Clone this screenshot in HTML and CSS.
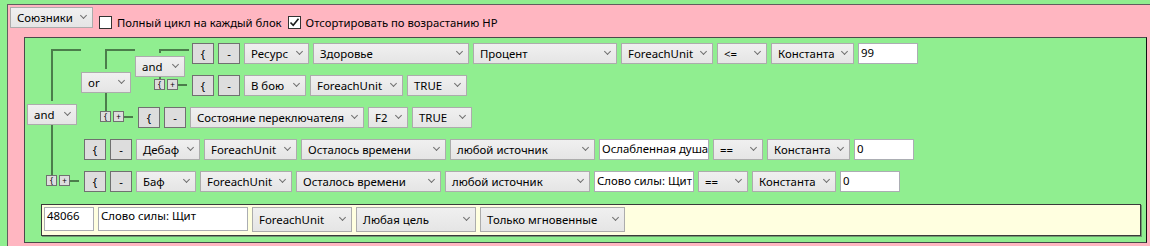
FILE: index.html
```html
<!DOCTYPE html>
<html lang="ru">
<head>
    <meta charset="UTF-8">
    <title>Правила</title>
    <link rel="stylesheet" href="styles.css">
</head>
<body>
    <div class="window">
        <div class="topbar">
            <div class="combo w83">Союзники</div>
            <label class="check"><span class="box"></span>Полный цикл на каждый блок</label>
            <label class="check"><span class="box"><svg width="11" height="11" viewBox="0 0 11 11"><path d="M1.5 5.5 L4.2 8.3 L9.5 1.8" fill="none" stroke="#1a1a1a" stroke-width="1.6"/></svg></span>Отсортировать по возрастанию HP</label>
        </div>

        <div class="rules">
            <!-- outer and -->
            <div class="group">
                <div class="op">
                    <div class="br-top"></div>
                    <div class="combo op-box">and</div>
                    <div class="br-mid"></div>
                    <div class="br-end"><span class="mini">{</span><span class="mini">+</span><span class="tail"></span></div>
                </div>
                <div class="kids">
                    <!-- or -->
                    <div class="group">
                        <div class="op">
                            <div class="br-top"></div>
                            <div class="combo op-box">or</div>
                            <div class="br-mid"></div>
                            <div class="br-end"><span class="mini">{</span><span class="mini">+</span><span class="tail"></span></div>
                        </div>
                        <div class="kids">
                            <!-- inner and -->
                            <div class="group">
                                <div class="op">
                                    <div class="br-top"></div>
                                    <div class="combo op-box">and</div>
                                    <div class="br-mid"></div>
                                    <div class="br-end"><span class="mini">{</span><span class="mini">+</span><span class="tail"></span></div>
                                </div>
                                <div class="kids">
                                    <div class="row">
                                        <div class="btn">{</div>
                                        <div class="btn">-</div>
                                        <div class="combo w65">Ресурс</div>
                                        <div class="combo w156">Здоровье</div>
                                        <div class="combo w144">Процент</div>
                                        <div class="combo w92">ForeachUnit</div>
                                        <div class="combo w50">&lt;=</div>
                                        <div class="combo w83">Константа</div>
                                        <div class="tb w60">99</div>
                                    </div>
                                    <div class="row">
                                        <div class="btn">{</div>
                                        <div class="btn">-</div>
                                        <div class="combo w62">В бою</div>
                                        <div class="combo w93">ForeachUnit</div>
                                        <div class="combo w60">TRUE</div>
                                    </div>
                                </div>
                            </div>
                            <div class="row">
                                <div class="btn">{</div>
                                <div class="btn">-</div>
                                <div class="combo w174">Состояние переключателя</div>
                                <div class="combo w40">F2</div>
                                <div class="combo w60">TRUE</div>
                            </div>
                        </div>
                    </div>
                    <div class="row">
                        <div class="btn">{</div>
                        <div class="btn">-</div>
                        <div class="combo w64">Дебаф</div>
                        <div class="combo w93">ForeachUnit</div>
                        <div class="combo w145">Осталось времени</div>
                        <div class="combo w145">любой источник</div>
                        <div class="tb w110">Ослабленная душа</div>
                        <div class="combo w50">==</div>
                        <div class="combo w83">Константа</div>
                        <div class="tb w60">0</div>
                    </div>
                    <div class="row">
                        <div class="btn">{</div>
                        <div class="btn">-</div>
                        <div class="combo w60">Баф</div>
                        <div class="combo w92">ForeachUnit</div>
                        <div class="combo w145">Осталось времени</div>
                        <div class="combo w145">любой источник</div>
                        <div class="tb w100">Слово силы: Щит</div>
                        <div class="combo w50">==</div>
                        <div class="combo w84">Константа</div>
                        <div class="tb w60">0</div>
                    </div>
                </div>
            </div>

            <div class="action">
                <div class="tb w50">48066</div>
                <div class="tb w150">Слово силы: Щит</div>
                <div class="combo w100">ForeachUnit</div>
                <div class="combo w120">Любая цель</div>
                <div class="combo w145">Только мгновенные</div>
            </div>
        </div>
    </div>
</body>
</html>
```

FILE: styles.css
```css
* {
    box-sizing: border-box;
}

body {
    margin: 0;
    height: 246px;
    overflow: hidden;
    background-color: #90ee90;
    font-family: "Noto Sans", "Open Sans", sans-serif;
    font-size: 11.4px;
    color: #000;
}

.window {
    margin: 4px 0 0 7px;
    width: 1160px;
    height: 242px;
    padding: 2px 0 0 2px;
    background-color: #ffb6c1;
    border-top: 1px solid #5f5f5f;
    border-left: 1px solid #5f5f5f;
}

.topbar {
    display: flex;
    height: 21px;
}

.check {
    display: flex;
    align-items: center;
    gap: 5px;
    height: 13px;
    margin: 9px 0 0 6px;
    font-size: 11.3px;
    line-height: 13px;
    white-space: nowrap;
}

.check + .check {
    margin-left: 6px;
}

.box {
    display: flex;
    align-items: center;
    justify-content: center;
    width: 13px;
    height: 13px;
    background-color: #fff;
    border: 1px solid #333;
}

/* controls */

.combo {
    position: relative;
    flex-shrink: 0;
    height: 21px;
    padding-left: 6px;
    line-height: 19px;
    white-space: nowrap;
    overflow: hidden;
    background: linear-gradient(#f0f0f0, #e5e5e5);
    border: 1px solid #acacac;
}

.combo::after {
    content: "";
    position: absolute;
    right: 6px;
    top: 5px;
    width: 4px;
    height: 4px;
    border-right: 1px solid #707070;
    border-bottom: 1px solid #707070;
    transform: rotate(45deg);
}

.btn {
    flex-shrink: 0;
    width: 22px;
    height: 21px;
    line-height: 19px;
    text-align: center;
    background-color: #ddd;
    border: 1px solid #707070;
}

.tb {
    flex-shrink: 0;
    height: 21px;
    padding: 0 2px;
    line-height: 17px;
    white-space: nowrap;
    overflow: hidden;
    background-color: #fff;
    border: 1px solid #abadb3;
}

.w40 { width: 40px; }
.w50 { width: 50px; }
.w60 { width: 60px; }
.w62 { width: 62px; }
.w64 { width: 64px; }
.w65 { width: 65px; }
.w83 { width: 83px; }
.w84 { width: 84px; }
.w92 { width: 92px; }
.w93 { width: 93px; }
.w100 { width: 100px; }
.w110 { width: 110px; }
.w120 { width: 120px; }
.w144 { width: 144px; }
.w145 { width: 145px; }
.w150 { width: 150px; }
.w156 { width: 156px; }
.w174 { width: 174px; }

/* rule tree */

.rules {
    width: 1123px;
    height: 206px;
    margin: 9px 0 0 14px;
    padding-top: 5px;
    background-color: #90ee90;
    border: 1px solid #4a4a4a;
    border-right-color: #111;
}

.group {
    display: flex;
}

.kids {
    display: flex;
    flex-direction: column;
    gap: 11px;
}

.row {
    display: flex;
    gap: 4px;
    height: 21px;
    padding-left: 5px;
}

.op {
    display: flex;
    flex-direction: column;
    flex-shrink: 0;
    width: 54px;
}

.br-top {
    flex: 1;
    width: 30px;
    margin: 6px 0 0 26px;
    border-top: 2px solid #4b7d4b;
    border-left: 2px solid #4b7d4b;
}

.op-box {
    width: 50px;
    margin: 3px 0 0 2px;
}

.br-mid {
    flex: 1;
    width: 2px;
    margin-left: 26px;
    border-left: 2px solid #4b7d4b;
}

.br-end {
    display: flex;
    align-items: center;
    gap: 2px;
    height: 11px;
    margin: 0 0 6px 21px;
}

.mini {
    width: 12px;
    height: 11px;
    font-size: 8px;
    line-height: 9px;
    text-align: center;
    background-color: #ddd;
    border: 1px solid #707070;
}

.tail {
    width: 10px;
    height: 2px;
    margin-left: -2px;
    background-color: #4b7d4b;
}

/* action bar */

.action {
    display: flex;
    align-items: flex-start;
    gap: 4px;
    width: 1100px;
    height: 32px;
    margin: 12px 0 0 16px;
    padding: 2px;
    background-color: #ffffe0;
    border: 1px solid #3a3a3a;
    box-shadow: 1px 1px 0 #6f9a6f;
}

.action .tb {
    height: 24px;
    line-height: 16px;
}

.action .combo {
    height: 25px;
    line-height: 23px;
}

.action .combo::after {
    top: 7px;
}
```
